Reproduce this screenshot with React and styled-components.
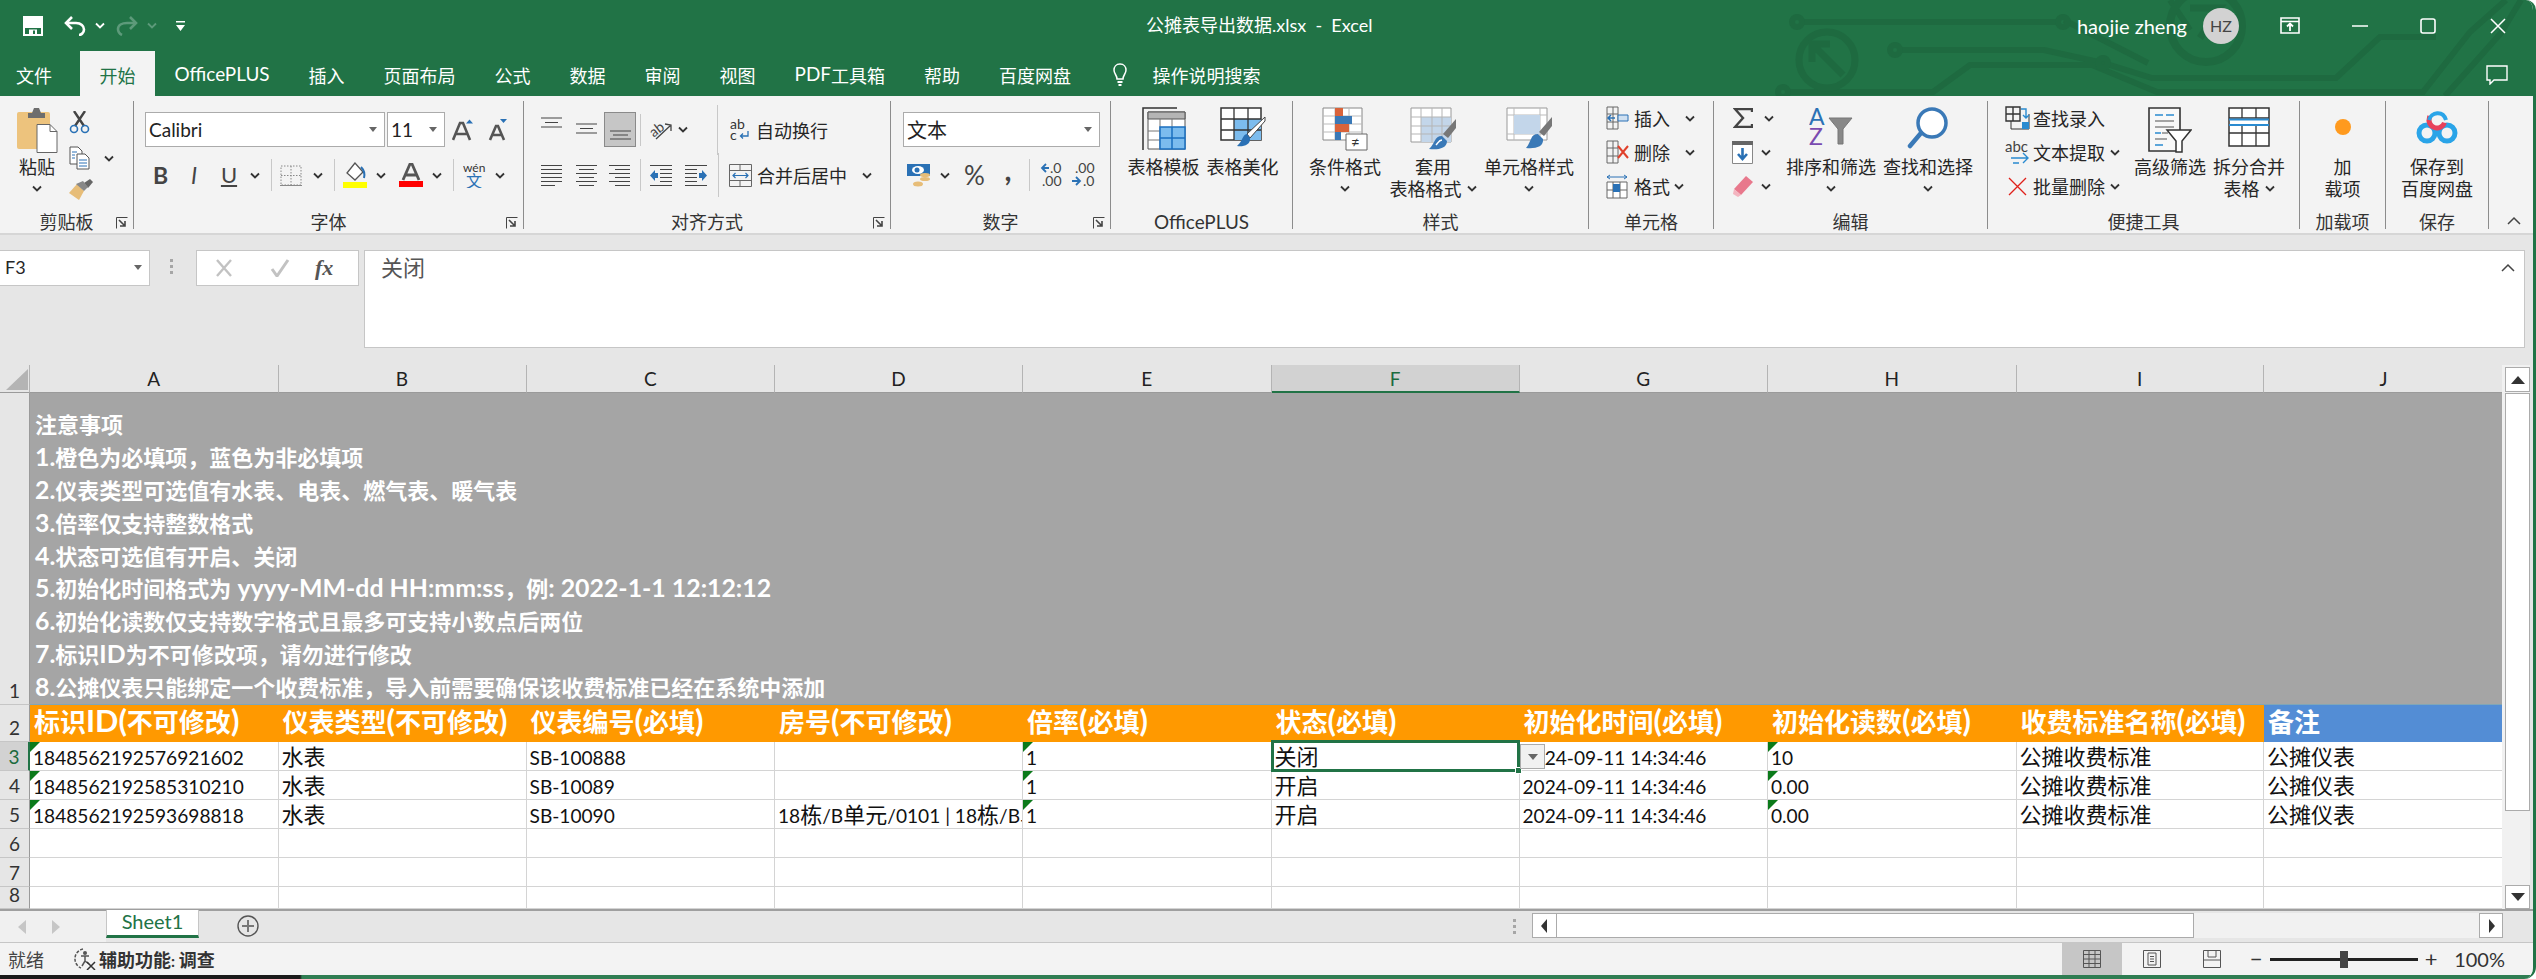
import React from 'react'
import styled, { createGlobalStyle } from 'styled-components'

const CJK = '"Noto Sans CJK SC", sans-serif'
const LATIN = 'Lato, "Noto Sans CJK SC", sans-serif'
const GREEN = '#217346'

const GlobalStyle = createGlobalStyle`
  html, body { margin: 0; padding: 0; background: #fff; }
  body { font-family: ${CJK}; font-size: 18px; color: #262626; }
  * { box-sizing: border-box; }
`

const LatinRun = styled.span`
  font-family: ${LATIN};
  font-size: ${p => p.$scale || 0.87}em;
  line-height: 1;
`
const mix = (text, scale) =>
  text.split(/([\x21-\x7e ]+)/).map((part, i) =>
    i % 2 ? <LatinRun key={i} $scale={scale}>{part}</LatinRun> : part
  )

const Win = styled.div`
  width: 2536px;
  height: 979px;
  display: flex;
  flex-direction: column;
  background: #f3f3f3;
  border-right: 3px solid ${GREEN};
  border-radius: 0 10px 12px 0;
  overflow: hidden;
`

/* title + tabs */
const Head = styled.div`
  position: relative;
  height: 96px;
  background: ${GREEN};
  color: #fff;
  flex: none;
`
const Circuit = styled.svg`
  position: absolute;
  left: 0;
  top: 0;
`
const TitleBar = styled.div`
  position: relative;
  height: 51px;
  display: flex;
  align-items: center;
  padding-left: 23px;
`
const QatSlot = styled.div`
  display: flex;
  align-items: center;
  justify-content: center;
  flex: none;
  width: ${p => p.$w}px;
  margin-left: ${p => p.$ml || 0}px;
`
const DocTitle = styled.div`
  position: absolute;
  left: 1146px;
  top: 9px;
  font-size: 18px;
  line-height: 30px;
  white-space: pre;
`
const TitleRight = styled.div`
  margin-left: auto;
  display: flex;
  align-items: center;
  height: 51px;
`
const UserName = styled.div`
  font-family: ${LATIN};
  font-size: 20px;
  padding-right: 16px;
  white-space: nowrap;
`
const Avatar = styled.div`
  width: 36px;
  height: 36px;
  border-radius: 50%;
  background: #d2d2d2;
  color: #444;
  font-family: ${LATIN};
  font-size: 16px;
  display: flex;
  align-items: center;
  justify-content: center;
`
const TabRow = styled.div`
  position: relative;
  height: 45px;
  display: flex;
`
const Tab = styled.div`
  flex: none;
  height: 45px;
  padding: 2px 19.5px 0;
  display: flex;
  align-items: center;
  font-size: 18px;
  background: ${p => (p.$active ? '#f3f3f3' : 'transparent')};
  color: ${p => (p.$active ? GREEN : '#fff')};
`
const FileTab = styled(Tab)`
  padding: 2px 28px 0 16px;
`
const BulbTab = styled(Tab)`
  padding: 2px 13px 0 23px;
`
const SearchTab = styled(Tab)`
  padding: 2px 0 0 12px;
`
const CommentSlot = styled.div`
  position: absolute;
  right: 25px;
  top: 13px;
`

/* ribbon */
const Ribbon = styled.div`
  flex: none;
  height: 139px;
  display: flex;
  background: #f3f3f3;
  border-bottom: 2px solid #d6d6d6;
  padding-top: 5px;
  position: relative;
`
const Group = styled.div`
  position: relative;
  flex: none;
  width: ${p => p.$w}px;
  height: 128px;
  display: flex;
  flex-direction: column;
  border-right: 1px solid #8c8c8c;
`
const GroupBody = styled.div`
  flex: 1;
  display: flex;
  min-height: 0;
  padding-left: ${p => p.$pad || 0}px;
`
const GroupLabel = styled.div`
  height: 20px;
  line-height: 24px;
  text-align: center;
  font-size: 18px;
  white-space: nowrap;
  color: #333;
`
const Launcher = styled.svg`
  position: absolute;
  right: 5px;
  bottom: 0;
`
const Stack = styled.div`
  display: flex;
  flex-direction: column;
  flex: none;
  width: ${p => (p.$w ? `${p.$w}px` : 'auto')};
  margin-left: ${p => p.$ml || 0}px;
`
const RowA = styled.div`
  display: flex;
  align-items: center;
  height: 35px;
  margin-top: 11px;
`
const RowB = styled.div`
  display: flex;
  align-items: center;
  height: 30px;
  margin-top: 13px;
`
const SmallRow = styled.div`
  display: flex;
  align-items: center;
  height: ${p => p.$h || 34}px;
  white-space: nowrap;
`
const Tool = styled.div`
  flex: none;
  display: flex;
  align-items: center;
  justify-content: center;
  width: ${p => p.$w}px;
  margin-left: ${p => p.$ml || 0}px;
  margin-top: ${p => p.$mt || 0}px;
  height: ${p => (p.$h ? `${p.$h}px` : 'auto')};
  background: ${p => (p.$on ? '#c6c6c6' : 'transparent')};
  border: ${p => (p.$on ? '1px solid #8a8a8a' : 'none')};
`
const Sep = styled.div`
  flex: none;
  width: 1px;
  height: ${p => p.$h || 32}px;
  background: #c8c8c8;
  margin-left: ${p => p.$ml || 0}px;
`
const ToolText = styled.span`
  flex: none;
  margin-left: ${p => p.$ml || 6}px;
  font-size: 18px;
  white-space: nowrap;
`
const Field = styled.div`
  flex: none;
  position: relative;
  width: ${p => p.$w}px;
  height: 35px;
  margin-left: ${p => p.$ml || 0}px;
  background: #fff;
  border: 1px solid #ababab;
  display: flex;
  align-items: center;
  padding-left: 3px;
  font-family: ${p => (p.$cjk ? CJK : LATIN)};
  font-size: ${p => (p.$cjk ? 20 : 19)}px;
  color: #222;
`
const FieldArrow = styled.i`
  position: absolute;
  right: 7px;
  top: 14px;
  border-left: 4px solid transparent;
  border-right: 4px solid transparent;
  border-top: 5px solid #666;
`
const BigButton = styled.div`
  flex: none;
  width: ${p => p.$w}px;
  margin-left: ${p => p.$ml || 0}px;
  padding-top: 6px;
  display: flex;
  flex-direction: column;
  align-items: center;
`
const BigIcon = styled.div`
  height: 48px;
  display: flex;
  align-items: flex-start;
  justify-content: center;
`
const BigLine = styled.div`
  height: 22px;
  line-height: 22px;
  font-size: 18px;
  white-space: nowrap;
  display: flex;
  align-items: center;
  gap: ${p => p.$gap || 0}px;
`
const Collapse = styled.svg`
  align-self: flex-end;
  margin: 0 0 8px 18px;
  flex: none;
`
const BoxGlyph = styled.span`
  font-family: ${LATIN};
  font-size: ${p => p.$size}px;
  font-weight: ${p => p.$weight || 700};
  font-style: ${p => (p.$italic ? 'italic' : 'normal')};
  text-decoration: ${p => (p.$under ? 'underline' : 'none')};
  text-underline-offset: 2px;
  line-height: 1;
  color: #444;
`
const CommaGlyph = styled(BoxGlyph)`
  margin-top: -12px;
`

/* formula bar */
const FormulaBar = styled.div`
  flex: none;
  height: 130px;
  background: #e6e6e6;
  padding: 15px 8px 0 0;
  display: flex;
  align-items: flex-start;
`
const NameBox = styled.div`
  position: relative;
  width: 150px;
  height: 36px;
  background: #fff;
  border: 1px solid #c6c6c6;
  border-left: none;
  font-family: ${LATIN};
  font-size: 18px;
  line-height: 33px;
  padding-left: 5px;
`
const Grip = styled.div`
  flex: none;
  margin-left: ${p => p.$ml}px;
  margin-top: ${p => p.$mt}px;
  width: 3px;
  height: 15px;
  background: repeating-linear-gradient(#a6a6a6 0 3px, transparent 3px 6px);
`
const FxBox = styled.div`
  width: 163px;
  height: 36px;
  margin-left: 23px;
  background: #fff;
  border: 1px solid #c6c6c6;
  display: flex;
  align-items: center;
`
const FxGlyph = styled.span`
  font-family: "Liberation Serif", serif;
  font-style: italic;
  font-weight: 700;
  font-size: 22px;
  color: #555;
  margin-left: 25px;
`
const FormulaInput = styled.div`
  position: relative;
  flex: 1;
  height: 98px;
  margin-left: 5px;
  background: #fff;
  border: 1px solid #c6c6c6;
  padding: 0 0 0 16px;
  font-size: 22px;
  line-height: 30px;
  color: #555;
`
const ExpandUp = styled.svg`
  position: absolute;
  right: 9px;
  top: 12px;
`

/* sheet */
const SheetArea = styled.div`
  flex: none;
  height: 544px;
  display: flex;
  background: #e6e6e6;
`
const Grid = styled.div`
  flex: none;
  width: 2502px;
  height: 544px;
  display: grid;
  grid-template-columns: 30px 248.5px 248px 248.5px 248px 248.5px 248px 248.5px 248.5px 247.5px 240px;
  grid-template-rows: 28px 312px 37px 28.5px 29px 29px 29px 29px 22.5px;
  background: #fff;
  overflow: hidden;
`
const ColHead = styled.div`
  position: relative;
  display: flex;
  align-items: center;
  justify-content: center;
  font-family: ${LATIN};
  font-size: 19px;
  color: ${p => (p.$sel ? '#1c6b3e' : '#222')};
  background: ${p => (p.$sel ? '#d2d2d2' : '#e6e6e6')};
  border-right: 1px solid #b4b4b4;
  border-bottom: ${p => (p.$sel ? `2px solid ${GREEN}` : '1px solid #9a9a9a')};
  &:last-of-type {
    border-right: none;
  }
`
const Corner = styled.div`
  background: #e6e6e6;
  border-right: 1px solid #b4b4b4;
  border-bottom: 1px solid #9a9a9a;
  padding: 4px 0 0 6px;
`
const RowHead = styled.div`
  display: flex;
  align-items: flex-end;
  justify-content: center;
  overflow: hidden;
  font-family: ${LATIN};
  font-size: 19px;
  line-height: 27px;
  color: ${p => (p.$sel ? '#1c6b3e' : '#333')};
  background: ${p => (p.$sel ? '#d2d2d2' : '#e6e6e6')};
  border-bottom: 1px solid #c6c6c6;
  border-right: ${p => (p.$sel ? `2px solid ${GREEN}` : '1px solid #9a9a9a')};
`
const NoteCell = styled.div`
  grid-column: 2 / 12;
  background: #a5a5a5;
  color: #fff;
  font-weight: 700;
  font-size: 22px;
  padding: 0 0 1px 5px;
  display: flex;
  flex-direction: column;
  justify-content: flex-end;
  border-bottom: 1px solid #7fa6b8;
`
const NoteLine = styled.div`
  height: 32.9px;
  line-height: 32.9px;
  white-space: nowrap;
`
const HeadCell = styled.div`
  background: ${p => (p.$blue ? '#538dd5' : '#ff9900')};
  color: #fff;
  font-weight: 700;
  font-size: 26px;
  line-height: 32px;
  padding-left: 4px;
  white-space: nowrap;
  overflow: hidden;
`
const Cell = styled.div`
  position: relative;
  display: flex;
  align-items: center;
  padding: 0 0 2px 3px;
  font-size: 22px;
  line-height: 26px;
  color: #111;
  white-space: nowrap;
  overflow: ${p => (p.$open ? 'visible' : 'hidden')};
  border-right: 1px solid #d4d4d4;
  border-bottom: 1px solid #d4d4d4;
  &::before {
    content: ${p => (p.$flag ? "''" : 'none')};
    position: absolute;
    left: 0;
    top: 0;
    border-top: 10px solid #0b7a1a;
    border-right: 10px solid transparent;
  }
`
const Selection = styled.div`
  position: absolute;
  left: -1px;
  top: -2px;
  right: -1px;
  bottom: -2px;
  border: 3px solid ${GREEN};
  z-index: 2;
  pointer-events: none;
`
const Handle = styled.i`
  position: absolute;
  right: -5px;
  bottom: -5px;
  width: 7px;
  height: 7px;
  background: ${GREEN};
  border: 1px solid #fff;
`
const DropButton = styled.div`
  position: absolute;
  left: 248px;
  top: 2px;
  width: 25px;
  height: 25px;
  background: #f1f1f1;
  border: 1px solid #ababab;
  z-index: 3;
  &::after {
    content: '';
    position: absolute;
    left: 7px;
    top: 9px;
    border-left: 5px solid transparent;
    border-right: 5px solid transparent;
    border-top: 6px solid #666;
  }
`

const VScroll = styled.div`
  flex: none;
  width: 28px;
  height: 544px;
  padding: 2px 0 0 3px;
  display: flex;
  flex-direction: column;
  background: #f1f1f1;
`
const VBtn = styled.div`
  flex: none;
  width: 25px;
  height: ${p => p.$h}px;
  background: #fff;
  border: 1px solid #ababab;
  display: flex;
  align-items: center;
  justify-content: center;
`
const VThumb = styled.div`
  flex: none;
  width: 25px;
  height: 418px;
  margin-top: 1px;
  background: #fff;
  border: 1px solid #ababab;
`
const Fill = styled.div`
  flex: 1;
`

/* sheet tabs */
const TabStrip = styled.div`
  flex: none;
  height: 33px;
  background: #e6e6e6;
  border-top: 2px solid #9f9f9f;
  display: flex;
  align-items: flex-start;
  position: relative;
`
const NavArrows = styled.div`
  flex: none;
  width: 106px;
  height: 31px;
  display: flex;
  align-items: center;
  gap: 26px;
  padding-left: 18px;
  background: #f0f0f0;
`
const SheetTab = styled.div`
  flex: none;
  width: 93px;
  height: 28px;
  background: #fff;
  border: 1px solid #c6c6c6;
  border-top: none;
  border-bottom: 3px solid ${GREEN};
  color: ${GREEN};
  font-family: ${LATIN};
  font-size: 20px;
  line-height: 22px;
  text-align: center;
  margin-top: -1px;
`
const AddSlot = styled.div`
  flex: none;
  margin: 4px 0 0 38px;
  height: 22px;
`
const HScroll = styled.div`
  flex: none;
  width: 971px;
  height: 25px;
  margin: 2px 0 0 16px;
  display: flex;
  background: #f1f1f1;
`
const HBtn = styled.div`
  flex: none;
  width: ${p => p.$w}px;
  height: 25px;
  background: #fff;
  border: 1px solid #ababab;
  display: flex;
  align-items: center;
  justify-content: center;
`
const HThumb = styled.div`
  flex: none;
  width: 637px;
  height: 25px;
  background: #fff;
  border: 1px solid #ababab;
  border-left: none;
`

/* status bar */
const StatusBar = styled.div`
  flex: none;
  height: 33px;
  background: #f3f3f3;
  border-top: 1px solid #c6c6c6;
  display: flex;
  align-items: center;
  padding-left: 8px;
  font-size: 18px;
  color: #444;
`
const StatusBold = styled.span`
  font-weight: 700;
  margin-left: 3px;
  color: #333;
`
const ViewBtn = styled.div`
  flex: none;
  width: 60px;
  height: 32px;
  display: flex;
  align-items: center;
  justify-content: center;
  background: ${p => (p.$on ? '#c6c6c6' : 'transparent')};
`
const Slider = styled.div`
  position: relative;
  flex: none;
  width: 148px;
  height: 3px;
  background: #222;
  margin-left: 7px;
  &::after {
    content: '';
    position: absolute;
    left: 70px;
    top: -7px;
    width: 8px;
    height: 17px;
    background: #444;
  }
`
const ZoomSign = styled.span`
  flex: none;
  font-family: ${LATIN};
  font-size: 22px;
  line-height: 22px;
  width: ${p => p.$w}px;
  margin-left: ${p => p.$ml || 0}px;
  text-align: center;
  color: #333;
`
const ZoomPct = styled.span`
  flex: none;
  font-family: ${LATIN};
  font-size: 20px;
  margin-left: 16px;
  color: #333;
`
const BottomEdge = styled.div`
  flex: none;
  height: 4px;
  background: linear-gradient(90deg, #1a1a1a 0 300px, #2f7d52 302px);
`

/* icons */
const Chev = ({ c = '#333' }) => (
  <svg width="10" height="7" viewBox="0 0 10 7"><path d="M1 1.5l4 4 4-4" fill="none" stroke={c} strokeWidth="1.800" /></svg>
)
const Launch = () => (
  <Launcher width="12" height="12" viewBox="0 0 12 12">
    <path d="M.5 11.5v-11h11" fill="none" stroke="#444" strokeWidth="1" />
    <path d="M3 3l6 6M9 4v5H4" fill="none" stroke="#444" strokeWidth="1.600" />
  </Launcher>
)
const Save = () => (
  <svg width="20" height="20" viewBox="0 0 20 20">
    <path d="M1 1h18v18H1z" fill="none" stroke="#fff" strokeWidth="2" />
    <path d="M2 2h16v10H2z" fill="#fff" />
    <path d="M6 13.500h8V19H6z" fill="#fff" /><path d="M10 14.500h2V18h-2z" fill={GREEN} />
  </svg>
)
const Undo = ({ c = '#fff' }) => (
  <svg width="22" height="20" viewBox="0 0 22 20">
    <path d="M8 1L2 7l6 6" fill="none" stroke={c} strokeWidth="2.600" />
    <path d="M3 7h9c5 0 8 3 8 6.500S17 19 15 19" fill="none" stroke={c} strokeWidth="2.600" />
  </svg>
)
const Redo = ({ c = '#5d9a7a' }) => (
  <svg width="22" height="20" viewBox="0 0 22 20">
    <path d="M14 1l6 6-6 6" fill="none" stroke={c} strokeWidth="2.600" />
    <path d="M19 7h-8C6 7 2 9 2 13s2 5 4 6" fill="none" stroke={c} strokeWidth="2.600" />
  </svg>
)
const QatMore = () => (
  <svg width="9" height="12" viewBox="0 0 9 12"><path d="M0 1h9v1.500H0zM0 5h9L4.500 11z" fill="#fff" /></svg>
)
const RibbonOpts = () => (
  <svg width="20" height="17" viewBox="0 0 20 17">
    <path d="M1 1h18v15H1z" fill="none" stroke="#fff" strokeWidth="1.600" /><path d="M1 4.500h18" stroke="#fff" strokeWidth="1.600" />
    <path d="M10 14V7M7 9.500L10 6.500l3 3" fill="none" stroke="#fff" strokeWidth="1.800" />
  </svg>
)
const Minimize = () => <svg width="16" height="16" viewBox="0 0 16 16"><path d="M0 8h16" stroke="#fff" strokeWidth="1.600" /></svg>
const Maximize = () => <svg width="16" height="16" viewBox="0 0 16 16"><rect x="1" y="1" width="14" height="14" rx="2" fill="none" stroke="#fff" strokeWidth="1.600" /></svg>
const CloseX = () => <svg width="16" height="16" viewBox="0 0 16 16"><path d="M1 1l14 14M15 1L1 15" stroke="#fff" strokeWidth="1.500" /></svg>
const Comment = () => (
  <svg width="22" height="20" viewBox="0 0 22 20">
    <path d="M1 1h20v14H8l-4 4v-4H1z" fill="none" stroke="#fff" strokeWidth="1.400" />
  </svg>
)
const Bulb = () => (
  <svg width="14" height="24" viewBox="0 0 14 24">
    <path d="M7 1C3 1 1 4 1 7c0 4 3 5 3 9h6c0-4 3-5 3-9 0-3-2-6-6-6z" fill="none" stroke="#fff" strokeWidth="1.500" />
    <path d="M4.500 19h5M5.500 22h3" stroke="#fff" strokeWidth="1.800" />
  </svg>
)
const PasteIcon = () => (
  <svg width="42" height="46" viewBox="0 0 42 46">
    <rect x="1" y="5" width="33" height="37" rx="2" fill="#edc37d" />
    <path d="M12 11V6h4l2-5h5l2 5h4v5z" fill="#6d6d6d" />
    <path d="M21 17.500h13l7 7v21H21z" fill="#fff" stroke="#666" />
    <path d="M34 17.500v7h7" fill="none" stroke="#666" />
  </svg>
)
const Scissors = () => (
  <svg width="21" height="23" viewBox="0 0 21 23">
    <path d="M5 0l10 15M16 0L6 15" stroke="#444" strokeWidth="2.400" fill="none" />
    <circle cx="5" cy="18" r="3.500" fill="none" stroke="#2a71b5" strokeWidth="1.600" />
    <circle cx="16" cy="18" r="3.500" fill="none" stroke="#2a71b5" strokeWidth="1.600" />
  </svg>
)
const CopyIcon = () => (
  <svg width="21" height="24" viewBox="0 0 21 24">
    <path d="M1 1h8l4 4v13H1z" fill="#fff" stroke="#555" />
    <path d="M8 8h8l4 4v11H8z" fill="#fff" stroke="#555" />
    <path d="M3 6h5M3 9h3M3 12h3M10 14h8M10 17h8M10 20h8" stroke="#2a71b5" />
  </svg>
)
const Painter = () => (
  <svg width="24" height="21" viewBox="0 0 24 21">
    <path d="M8 5l7 7-5 9-10-7z" fill="#e7bd78" />
    <path d="M15 4l6-4 3 3-5 6z" fill="#666" />
    <path d="M7 5l7-3 5 6-4 4z" fill="#888" />
  </svg>
)
const GrowA = ({ up }) => (
  <svg width="22" height="22" viewBox="0 0 22 22">
    <path d={up ? 'M1 21L8 4h3l7 17M4 15h11' : 'M4 21L10 7h2l6 14M6.500 16h9'} fill="none" stroke="#555" strokeWidth="2.600" />
    <path d={up ? 'M14 4.500l3.500-4 3.500 4z' : 'M14 0h7l-3.500 4z'} fill="#2a71b5" />
  </svg>
)
const BorderIcon = () => (
  <svg width="22" height="21" viewBox="0 0 22 21">
    <path d="M1 1h20v19H1zM11 1v19M1 10.500h20" fill="none" stroke="#888" strokeDasharray="1.500 1.500" />
    <path d="M0 20.500h22" stroke="#888" />
  </svg>
)
const FillIcon = () => (
  <svg width="24" height="26" viewBox="0 0 24 26">
    <path d="M12 1L4 11l8 7 8-8z" fill="#fff" stroke="#555" strokeWidth="1.300" />
    <path d="M18 5c3 3 4 7 3 11" fill="none" stroke="#2a71b5" strokeWidth="2" />
    <path d="M0 20h24v6H0z" fill="#ffff00" />
  </svg>
)
const FontColor = () => (
  <svg width="24" height="24" viewBox="0 0 24 24">
    <path d="M4 17L11 1h2l7 16M7 12h10" fill="none" stroke="#555" strokeWidth="2.800" />
    <path d="M0 18h24v6H0z" fill="#ff0000" />
  </svg>
)
const Wen = () => (
  <svg width="24" height="26" viewBox="0 0 24 26">
    <text x="0" y="10" fontFamily="Lato, sans-serif" fontSize="12" fill="#333">wén</text>
    <text x="3" y="25" fontFamily={CJK} fontSize="16" fill="#2a71b5">文</text>
  </svg>
)
// row A icons share one 33px tall box so the rows of lines sit at their own height
const LINE_SETS = {
  top: 'M0 5h21M4 9.500h13M0 14h21',
  mid: 'M0 11h21M4 15.500h13M0 20h21',
  bot: 'M0 18h21M3 22h15M0 26h21'
}
const VAlign = ({ kind }) => (
  <svg width="21" height="33" viewBox="0 0 21 33"><path d={LINE_SETS[kind]} fill="none" stroke="#444" strokeWidth="1.200" /></svg>
)
const HALIGN = {
  left: 'M0 .5h21M0 4.500h21M0 8.500h21M0 12.500h21M0 16.500h21M0 20.500h14',
  center: 'M0 .5h21M3 4.500h15M0 8.500h21M3 12.500h15M0 16.500h21M3 20.500h15',
  right: 'M0 .5h21M6 4.500h15M0 8.500h21M6 12.500h15M0 16.500h21M6 20.500h15'
}
const HAlign = ({ kind }) => (
  <svg width="21" height="21" viewBox="0 0 21 21"><path d={HALIGN[kind]} fill="none" stroke="#444" strokeWidth="1.100" /></svg>
)
const Orient = () => (
  <svg width="23" height="22" viewBox="0 0 23 22">
    <text x="0" y="16" fontFamily="Lato, sans-serif" fontSize="14" fill="#444" transform="rotate(-38 6 12)">ab</text>
    <path d="M6 20L21 6M15 5l6 1v6" fill="none" stroke="#444" strokeWidth="1.300" />
  </svg>
)
const WrapIcon = () => (
  <svg width="20" height="22" viewBox="0 0 20 22">
    <text x="0" y="10" fontFamily="Lato, sans-serif" fontSize="14" fill="#333">ab</text>
    <text x="0" y="21" fontFamily="Lato, sans-serif" fontSize="14" fill="#333">c</text>
    <path d="M18 12v5h-7M13 14.500L10.500 17l2.500 2.500" fill="none" stroke="#2a71b5" strokeWidth="1.300" />
  </svg>
)
const Indent = ({ back }) => (
  <svg width="23" height="21" viewBox="0 0 23 21">
    <path d={back ? 'M0 .5h22M10 4.500h12M10 8.500h12M10 12.500h12M10 16.500h12M0 20.500h22' : 'M1 .5h22M1 4.500h12M1 8.500h12M1 12.500h12M1 16.500h12M1 20.500h22'} stroke="#444" strokeWidth="1.100" />
    <path d={back ? 'M5 5l-5 5.500L5 16v-3h3V8H5z' : 'M18 5l5 5.500L18 16v-3h-3V8h3z'} fill="#2a71b5" />
  </svg>
)
const MergeIcon = () => (
  <svg width="23" height="23" viewBox="0 0 23 23">
    <path d="M.5 .5h22v22H.5zM.5 6.500h22M.5 16.500h22M11 .5v6M11 16.500v6" fill="none" stroke="#666" />
    <path d="M4 11.500h15M6.500 9L4 11.500 6.500 14M16.500 9l2.500 2.500-2.500 2.500" fill="none" stroke="#2a71b5" strokeWidth="1.200" />
  </svg>
)
const Currency = () => (
  <svg width="24" height="23" viewBox="0 0 24 23">
    <path d="M0 0h23v12H0z" fill="#2a71b5" />
    <ellipse cx="11" cy="6" rx="6" ry="4" fill="#fff" /><circle cx="10" cy="6" r="2.500" fill="#2a71b5" />
    <ellipse cx="18" cy="11" rx="5" ry="2" fill="#e7bd78" /><ellipse cx="18" cy="15" rx="5" ry="2" fill="#e7bd78" /><ellipse cx="11" cy="20" rx="5" ry="2.500" fill="#e7bd78" />
  </svg>
)
const DecIcon = ({ more }) => (
  <svg width="26" height="26" viewBox="0 0 26 26">
    {more ? (
      <>
        <text x="11" y="11" fontFamily={LATIN} fontSize="14" fill="#444">.0</text>
        <text x="3" y="24" fontFamily={LATIN} fontSize="14" fill="#444">.00</text>
        <path d="M7 2L3 6l4 4M3 6h7" fill="none" stroke="#2a71b5" strokeWidth="1.800" />
      </>
    ) : (
      <>
        <text x="4" y="11" fontFamily={LATIN} fontSize="14" fill="#444">.00</text>
        <text x="12" y="24" fontFamily={LATIN} fontSize="14" fill="#444">.0</text>
        <path d="M5 15l4 4-4 4M1 19h7" fill="none" stroke="#2a71b5" strokeWidth="1.800" />
      </>
    )}
  </svg>
)
const TableTpl = () => (
  <svg width="44" height="44" viewBox="0 0 44 44">
    <path d="M1 43V1h34" fill="none" stroke="#333" strokeWidth="1.500" />
    <path d="M6 5h37v37H6z" fill="#fff" stroke="#555" />
    <path d="M6 5h37v7H6z" fill="#b5b5b5" stroke="#555" />
    <path d="M18 12v30M30 12v12M6 24h37M6 33h37" fill="none" stroke="#777" />
    <path d="M18 20h25v22H18z" fill="#7cbcee" stroke="#1a6fc0" strokeWidth="1.500" />
    <path d="M18 31h25M30 20v22" stroke="#1a6fc0" strokeWidth="1.500" />
  </svg>
)
const TableBeauty = () => (
  <svg width="46" height="42" viewBox="0 0 46 42">
    <path d="M1 1h40v32H1z" fill="#fff" stroke="#333" strokeWidth="1.500" />
    <path d="M14 12h27v21H14z" fill="#7cbcee" />
    <path d="M1 12h40M1 23h40M14 1v32M28 1v32" fill="none" stroke="#333" strokeWidth="1.300" />
    <path d="M45 10L27 27l3 4L45 14z" fill="#fff" stroke="#444" />
    <path d="M27 27c-5 1-4 7-10 12 6 1 14-1 13-8z" fill="#2a71b5" />
  </svg>
)
const CondFmt = () => (
  <svg width="46" height="44" viewBox="0 0 46 44">
    <path d="M1 1h39v32H1z" fill="#fff" stroke="#888" />
    <path d="M1 9h39M1 17h39M1 25h39M13 1v32M27 1v32" stroke="#bbb" />
    <path d="M13 1h8v8h-8zM13 17h14v8H13z" fill="#d9633a" />
    <path d="M13 9h17v8H13zM13 25h6v8h-6z" fill="#3a79b7" />
    <path d="M24 27h21v16H24z" fill="#fff" stroke="#666" />
    <text x="29" y="41" fontFamily="Lato, sans-serif" fontSize="15" fill="#333">≠</text>
  </svg>
)
const TableFmt = () => (
  <svg width="46" height="44" viewBox="0 0 46 44">
    <path d="M1 1h40v34H1z" fill="#fff" stroke="#999" />
    <path d="M11 10h30v25H11z" fill="#c3d6ea" />
    <path d="M1 10h40M1 19h40M1 27h40M11 1v34M22 1v34M32 1v34" stroke="#b5b5b5" />
    <path d="M46 12L33 27l5 4 8-10z" fill="#777" />
    <path d="M32 29c-8 0-7 8-13 13 8 1 18 0 18-8z" fill="#3a79b7" />
    <path d="M26 38c2-2 3-5 6-5" stroke="#fff" strokeWidth="1.500" fill="none" />
  </svg>
)
const CellStyle = () => (
  <svg width="46" height="42" viewBox="0 0 46 42">
    <path d="M1 1h40v32H1z" fill="#fff" stroke="#999" />
    <path d="M1 8h40M1 27h40M8 1v32M34 1v32" stroke="#bbb" />
    <path d="M8 8h26v19H8z" fill="#c3d6ea" />
    <path d="M46 10L33 25l5 4 8-10z" fill="#777" />
    <path d="M32 27c-8 0-6 7-12 14 9 1 18-1 17-9z" fill="#3a79b7" />
  </svg>
)
const CellsIcon = ({ kind }) => (
  <svg width="23" height="25" viewBox="0 0 23 25">
    <path d={kind === 'fmt' ? 'M1 8h20v16H1zM7 8v16M14 8v16M1 16h20' : 'M1 1h11v22H1zM1 8h11M1 16h11M7 1v22'} fill={kind === 'fmt' ? '#fff' : 'none'} stroke="#666" />
    {kind === 'ins' && <><path d="M12 9h10v6H12z" fill="#cfe0f1" stroke="#2a71b5" /><path d="M9 12H2M5 9l-3 3 3 3" fill="none" stroke="#2a71b5" strokeWidth="1.500" /></>}
    {kind === 'del' && <path d="M12 6l10 12M22 6L12 18" stroke="#e0402a" strokeWidth="2" />}
    {kind === 'fmt' && <><path d="M1 3h20M4 1L1 3l3 2M18 1l3 2-3 2" fill="none" stroke="#2a71b5" /><path d="M7 10h7v8H7z" fill="#2a71b5" /></>}
  </svg>
)
const Sigma = () => (
  <svg width="20" height="20" viewBox="0 0 20 20"><path d="M19 4V1H2l8 9-8 9h17v-3" fill="none" stroke="#444" strokeWidth="2.400" /></svg>
)
const FillDown = () => (
  <svg width="21" height="23" viewBox="0 0 21 23">
    <path d="M.5 .5h20v22H.5z" fill="#fff" stroke="#888" /><path d="M0 0h21v4H0z" fill="#666" />
    <path d="M10.500 7v11M6 13l4.500 5 4.500-5" fill="none" stroke="#2a71b5" strokeWidth="2.600" />
  </svg>
)
const Eraser = () => (
  <svg width="22" height="21" viewBox="0 0 22 21">
    <path d="M14 0l7 6L9 19l-7-6z" fill="#e8788c" /><path d="M2 13l7 6-3 2-5-3z" fill="#f3b4bf" />
  </svg>
)
const SortIcon = () => (
  <svg width="44" height="40" viewBox="0 0 44 40">
    <text x="0" y="18" fontFamily={LATIN} fontSize="23" fill="#2a71b5">A</text>
    <text x="0" y="38" fontFamily={LATIN} fontSize="23" fill="#7a4bb0">Z</text>
    <path d="M20 11h23l-9 11v15h-5V22z" fill="#888" stroke="#777" />
  </svg>
)
const Magnifier = () => (
  <svg width="42" height="42" viewBox="0 0 42 42">
    <circle cx="25" cy="16" r="14" fill="#fff" stroke="#3a79b7" strokeWidth="3.500" />
    <path d="M14 26L3 39" stroke="#3a79b7" strokeWidth="4.500" strokeLinecap="round" />
  </svg>
)
const LookupIcon = () => (
  <svg width="25" height="24" viewBox="0 0 25 24">
    <path d="M1 1h14v14H1zM1 8h14M8 1v14" fill="none" stroke="#333" strokeWidth="1.400" />
    <path d="M6 15v8h18V8" fill="none" stroke="#333" />
    <path d="M16 3h5v8M18 9l3 3 3-3" fill="none" stroke="#2a8bd0" strokeWidth="1.400" />
    <path d="M17 16h7v7h-7z" fill="#2a8bd0" />
  </svg>
)
const ExtractIcon = () => (
  <svg width="25" height="24" viewBox="0 0 25 24">
    <text x="0" y="12" fontFamily="Lato, sans-serif" fontSize="15" fill="#444">abc</text>
    <path d="M6 18h17M18 13l5 5-5 5M8 23h6" fill="none" stroke="#2a8bd0" strokeWidth="1.400" />
  </svg>
)
const BatchDelete = () => (
  <svg width="19" height="19" viewBox="0 0 19 19"><path d="M1 1l17 17M18 1L1 18" stroke="#e0201a" strokeWidth="1.300" /></svg>
)
const AdvFilter = () => (
  <svg width="44" height="46" viewBox="0 0 44 46">
    <path d="M1 1h31v43H1z" fill="#f8f8f8" stroke="#333" strokeWidth="1.600" />
    <path d="M7 8h8M18 8h8" stroke="#2a8bd0" strokeWidth="1.600" />
    <path d="M7 14h19M7 20h19M14 26h6M7 32h12" stroke="#888" strokeWidth="1.600" />
    <path d="M7 26h6M7 38h8" stroke="#2a8bd0" strokeWidth="1.600" />
    <path d="M19 23h24l-9 11v11h-6V34z" fill="#fff" stroke="#333" strokeWidth="1.500" />
  </svg>
)
const SplitTable = () => (
  <svg width="42" height="40" viewBox="0 0 42 40">
    <path d="M1 1h40v38H1z" fill="#fff" stroke="#333" strokeWidth="1.500" />
    <path d="M1 11h40M1 26h40M14 1v10M28 1v10M14 18v21M28 18v21" stroke="#333" strokeWidth="1.300" fill="none" />
    <path d="M1 12.500h40M1 18h40" stroke="#2a8bd0" strokeWidth="2" />
  </svg>
)
const Dot = () => (
  <svg width="18" height="32" viewBox="0 0 18 32"><circle cx="9" cy="20" r="8" fill="#ff9a1e" /></svg>
)
const BaiduCloud = () => (
  <svg width="42" height="38" viewBox="0 0 42 38">
    <circle cx="11" cy="26" r="8" fill="none" stroke="#2aa4e8" strokeWidth="5" />
    <circle cx="31" cy="26" r="8" fill="none" stroke="#2aa4e8" strokeWidth="5" />
    <circle cx="21" cy="13" r="8" fill="none" stroke="#e8415a" strokeWidth="5" strokeDasharray="26 26" transform="rotate(20 21 13)" />
    <path d="M13 13c2-8 14-10 17 0" fill="none" stroke="#2aa4e8" strokeWidth="4" />
  </svg>
)
const CornerTri = () => (
  <svg width="22" height="21" viewBox="0 0 22 21" display="block"><path d="M22 0v21H0z" fill="#b4b4b4" /></svg>
)
const FxIconX = styled.svg`
  margin-left: 18px;
`
const FxIconCheck = styled.svg`
  margin-left: 37px;
`
const FxX = () => <FxIconX width="18" height="18" viewBox="0 0 18 18"><path d="M2 1l14 16M16 1L2 17" stroke="#c2c2c2" strokeWidth="2.400" /></FxIconX>
const FxCheck = () => <FxIconCheck width="20" height="18" viewBox="0 0 20 18"><path d="M2 10l5 7L18 1" fill="none" stroke="#c2c2c2" strokeWidth="3" /></FxIconCheck>
const TriBtn = ({ d, c = '#333' }) => <svg width="8" height="14" viewBox="0 0 8 14"><path d={d} fill={c} /></svg>
const Plus = () => (
  <svg width="22" height="22" viewBox="0 0 22 22">
    <circle cx="11" cy="11" r="10" fill="none" stroke="#555" strokeWidth="1.400" />
    <path d="M11 5v12M5 11h12" stroke="#777" strokeWidth="2" />
  </svg>
)
const AccessSvg = styled.svg`
  margin-left: 30px;
  flex: none;
`
const AccessIcon = () => (
  <AccessSvg width="22" height="22" viewBox="0 0 22 22">
    <path d="M9 1A10 10 0 0 0 7 20" fill="none" stroke="#555" strokeWidth="1.500" strokeDasharray="3 1.500" />
    <circle cx="11" cy="5" r="2" fill="#555" />
    <path d="M7 8h8M11 8v5l-3 5M11 13l4 3" fill="none" stroke="#555" strokeWidth="1.500" />
    <path d="M13 14l8 8M21 14l-8 8" stroke="#333" strokeWidth="1.500" />
  </AccessSvg>
)
const NormalView = () => (
  <svg width="18" height="18" viewBox="0 0 18 18"><path d="M.5 .5h17v17H.5zM.5 4.500h17M.5 9h17M.5 13.500h17M6 .5v17M12 .5v17" fill="none" stroke="#555" /></svg>
)
const LayoutView = () => (
  <svg width="18" height="18" viewBox="0 0 18 18"><path d="M.5 .5h17v17H.5zM5 3h8v12H5zM7 6.500h4M7 9h4M7 11.500h4" fill="none" stroke="#555" /></svg>
)
const BreakView = () => (
  <svg width="18" height="18" viewBox="0 0 18 18"><path d="M.5 .5h17v17H.5zM.5 10h17M5 .5V7h8V.5" fill="none" stroke="#555" /></svg>
)

const CircuitArt = () => (
  <Circuit width="2536" height="96" viewBox="0 0 2536 96">
    <g fill="none" stroke="#1e6a40" strokeWidth="6">
      <path d="M1800 22h260M1899 50h145l59 13 49 15h184l44-41h56" />
      <path d="M1786 92h147l37-27h122l65 27h266l47-60 36-32" />
      <path d="M2064 20l84 43M2170 0l20 30" />
      <path d="M2445 96l56-63 20-33" />
      <circle cx="1797" cy="22" r="5" /><circle cx="2063" cy="22" r="5" />
      <circle cx="1895" cy="50" r="5" /><circle cx="2103" cy="63" r="5" /><circle cx="1783" cy="92" r="5" />
      <circle cx="1827" cy="60" r="28" strokeWidth="7" />
      <circle cx="2206" cy="26" r="36" strokeWidth="8" />
      <path d="M1843 75l-28-28M1812 62V44h18" strokeWidth="7" />
      <path d="M2190 8h30l-20 30" strokeWidth="7" />
    </g>
  </Circuit>
)

const tabs = ['OfficePLUS', '插入', '页面布局', '公式', '数据', '审阅', '视图', 'PDF工具箱', '帮助', '百度网盘']
const columns = ['A', 'B', 'C', 'D', 'E', 'F', 'G', 'H', 'I', 'J']
const notes = [
  '注意事项',
  '1.橙色为必填项，蓝色为非必填项',
  '2.仪表类型可选值有水表、电表、燃气表、暖气表',
  '3.倍率仅支持整数格式',
  '4.状态可选值有开启、关闭',
  '5.初始化时间格式为 yyyy-MM-dd HH:mm:ss，例: 2022-1-1 12:12:12',
  '6.初始化读数仅支持数字格式且最多可支持小数点后两位',
  '7.标识ID为不可修改项，请勿进行修改',
  '8.公摊仪表只能绑定一个收费标准，导入前需要确保该收费标准已经在系统中添加'
]
const headers = ['标识ID(不可修改)', '仪表类型(不可修改)', '仪表编号(必填)', '房号(不可修改)', '倍率(必填)', '状态(必填)', '初始化时间(必填)', '初始化读数(必填)', '收费标准名称(必填)', '备注']
const rows = [
  ['1848562192576921602', '水表', 'SB-100888', '', '1', '关闭', '2024-09-11 14:34:46', '10', '公摊收费标准', '公摊仪表'],
  ['1848562192585310210', '水表', 'SB-10089', '', '1', '开启', '2024-09-11 14:34:46', '0.00', '公摊收费标准', '公摊仪表'],
  ['1848562192593698818', '水表', 'SB-10090', '18栋/B单元/0101 | 18栋/B单元/0102', '1', '开启', '2024-09-11 14:34:46', '0.00', '公摊收费标准', '公摊仪表']
]
const flagged = [0, 4, 7]

function App() {
  return (
    <Win>
      <GlobalStyle />
      <Head>
        <CircuitArt />
        <TitleBar>
          <QatSlot $w={20}><Save /></QatSlot>
          <QatSlot $w={22} $ml={21}><Undo /></QatSlot>
          <QatSlot $w={10} $ml={9}><Chev c="#fff" /></QatSlot>
          <QatSlot $w={22} $ml={11}><Redo /></QatSlot>
          <QatSlot $w={10} $ml={9}><Chev c="#5d9a7a" /></QatSlot>
          <QatSlot $w={10} $ml={18}><QatMore /></QatSlot>
          <DocTitle>{mix('公摊表导出数据.xlsx  -  Excel', 1)}</DocTitle>
          <TitleRight>
            <UserName>haojie zheng</UserName>
            <Avatar>HZ</Avatar>
            <QatSlot $w={20} $ml={41}><RibbonOpts /></QatSlot>
            <QatSlot $w={16} $ml={52}><Minimize /></QatSlot>
            <QatSlot $w={16} $ml={52}><Maximize /></QatSlot>
            <QatSlot $w={16} $ml={54}><CloseX /></QatSlot>
            <QatSlot $w={27} />
          </TitleRight>
        </TitleBar>
        <TabRow>
          <FileTab>文件</FileTab>
          <Tab $active>开始</Tab>
          {tabs.map(t => <Tab key={t}>{mix(t, 1.05)}</Tab>)}
          <BulbTab><Bulb /></BulbTab>
          <SearchTab>操作说明搜索</SearchTab>
          <CommentSlot><Comment /></CommentSlot>
        </TabRow>
      </Head>

      <Ribbon>
        <Group $w={134}>
          <GroupBody $pad={16}>
            <BigButton $w={42}>
              <BigIcon><PasteIcon /></BigIcon>
              <BigLine>粘贴</BigLine>
              <BigLine><Chev /></BigLine>
            </BigButton>
            <Stack $ml={10} $w={50}>
              <Tool $w={22} $h={40} $mt={1}><Scissors /></Tool>
              <SmallRow $h={32}>
                <Tool $w={22}><CopyIcon /></Tool>
                <Tool $w={10} $ml={14}><Chev /></Tool>
              </SmallRow>
              <Tool $w={26} $h={26} $mt={2}><Painter /></Tool>
            </Stack>
          </GroupBody>
          <GroupLabel>剪贴板</GroupLabel>
          <Launch />
        </Group>

        <Group $w={390}>
          <GroupBody $pad={11}>
            <Stack>
              <RowA>
                <Field $w={240}>Calibri<FieldArrow /></Field>
                <Field $w={58} $ml={2}>11<FieldArrow /></Field>
                <Tool $w={22} $ml={7}><GrowA up /></Tool>
                <Tool $w={22} $ml={12}><GrowA /></Tool>
              </RowA>
              <RowB>
                <Tool $w={15} $ml={8}><BoxGlyph $size={23}>B</BoxGlyph></Tool>
                <Tool $w={12} $ml={20}><BoxGlyph $size={23} $weight={400} $italic>I</BoxGlyph></Tool>
                <Tool $w={14} $ml={22}><BoxGlyph $size={22} $weight={400} $under>U</BoxGlyph></Tool>
                <Tool $w={10} $ml={14}><Chev /></Tool>
                <Sep $ml={11} />
                <Tool $w={22} $ml={8}><BorderIcon /></Tool>
                <Tool $w={10} $ml={11}><Chev /></Tool>
                <Sep $ml={11} />
                <Tool $w={24} $ml={8}><FillIcon /></Tool>
                <Tool $w={10} $ml={9}><Chev /></Tool>
                <Tool $w={24} $ml={13}><FontColor /></Tool>
                <Tool $w={10} $ml={9}><Chev /></Tool>
                <Sep $ml={11} />
                <Tool $w={24} $ml={9}><Wen /></Tool>
                <Tool $w={10} $ml={8}><Chev /></Tool>
              </RowB>
            </Stack>
          </GroupBody>
          <GroupLabel>字体</GroupLabel>
          <Launch />
        </Group>

        <Group $w={367}>
          <GroupBody $pad={17}>
            <Stack>
              <RowA>
                <Tool $w={21}><VAlign kind="top" /></Tool>
                <Tool $w={21} $ml={14}><VAlign kind="mid" /></Tool>
                <Tool $w={32} $ml={7} $h={35} $on><VAlign kind="bot" /></Tool>
                <Sep $ml={4} />
                <Tool $w={23} $ml={9}><Orient /></Tool>
                <Tool $w={10} $ml={5}><Chev /></Tool>
                <Sep $ml={29} $h={50} />
                <Tool $w={20} $ml={12}><WrapIcon /></Tool>
                <ToolText>自动换行</ToolText>
              </RowA>
              <RowB>
                <Tool $w={21}><HAlign kind="left" /></Tool>
                <Tool $w={21} $ml={14}><HAlign kind="center" /></Tool>
                <Tool $w={21} $ml={12}><HAlign kind="right" /></Tool>
                <Sep $ml={10} />
                <Tool $w={23} $ml={9}><Indent back /></Tool>
                <Tool $w={23} $ml={11}><Indent /></Tool>
                <Sep $ml={11} $h={44} />
                <Tool $w={23} $ml={10}><MergeIcon /></Tool>
                <ToolText $ml={5}>合并后居中</ToolText>
                <Tool $w={10} $ml={15}><Chev /></Tool>
              </RowB>
            </Stack>
          </GroupBody>
          <GroupLabel>对齐方式</GroupLabel>
          <Launch />
        </Group>

        <Group $w={220}>
          <GroupBody $pad={12}>
            <Stack>
              <RowA>
                <Field $w={197} $cjk>文本<FieldArrow /></Field>
              </RowA>
              <RowB>
                <Tool $w={24} $ml={4}><Currency /></Tool>
                <Tool $w={10} $ml={9}><Chev /></Tool>
                <Tool $w={21} $ml={14}><BoxGlyph $size={26} $weight={400}>%</BoxGlyph></Tool>
                <Tool $w={10} $ml={18}><CommaGlyph $size={30}>,</CommaGlyph></Tool>
                <Sep $ml={16} />
                <Tool $w={26} $ml={9}><DecIcon more /></Tool>
                <Tool $w={26} $ml={6}><DecIcon /></Tool>
              </RowB>
            </Stack>
          </GroupBody>
          <GroupLabel>数字</GroupLabel>
          <Launch />
        </Group>

        <Group $w={182}>
          <GroupBody>
            <BigButton $w={73} $ml={16}>
              <BigIcon><TableTpl /></BigIcon>
              <BigLine>表格模板</BigLine>
            </BigButton>
            <BigButton $w={73} $ml={6}>
              <BigIcon><TableBeauty /></BigIcon>
              <BigLine>表格美化</BigLine>
            </BigButton>
          </GroupBody>
          <GroupLabel>{mix('OfficePLUS', 1.05)}</GroupLabel>
        </Group>

        <Group $w={296}>
          <GroupBody>
            <BigButton $w={72} $ml={16}>
              <BigIcon><CondFmt /></BigIcon>
              <BigLine>条件格式</BigLine>
              <BigLine><Chev /></BigLine>
            </BigButton>
            <BigButton $w={90} $ml={7}>
              <BigIcon><TableFmt /></BigIcon>
              <BigLine>套用</BigLine>
              <BigLine $gap={5}>表格格式<Chev /></BigLine>
            </BigButton>
            <BigButton $w={90} $ml={6}>
              <BigIcon><CellStyle /></BigIcon>
              <BigLine>单元格样式</BigLine>
              <BigLine><Chev /></BigLine>
            </BigButton>
          </GroupBody>
          <GroupLabel>样式</GroupLabel>
        </Group>

        <Group $w={125}>
          <GroupBody $pad={17}>
            <Stack>
              <SmallRow><Tool $w={23}><CellsIcon kind="ins" /></Tool><ToolText $ml={5}>插入</ToolText><Tool $w={10} $ml={15}><Chev /></Tool></SmallRow>
              <SmallRow><Tool $w={23}><CellsIcon kind="del" /></Tool><ToolText $ml={5}>删除</ToolText><Tool $w={10} $ml={15}><Chev /></Tool></SmallRow>
              <SmallRow><Tool $w={23}><CellsIcon kind="fmt" /></Tool><ToolText $ml={5}>格式</ToolText><Tool $w={10} $ml={4}><Chev /></Tool></SmallRow>
            </Stack>
          </GroupBody>
          <GroupLabel>单元格</GroupLabel>
        </Group>

        <Group $w={274}>
          <GroupBody $pad={18}>
            <Stack $w={54}>
              <SmallRow><Tool $w={21}><Sigma /></Tool><Tool $w={10} $ml={11}><Chev /></Tool></SmallRow>
              <SmallRow><Tool $w={21}><FillDown /></Tool><Tool $w={10} $ml={8}><Chev /></Tool></SmallRow>
              <SmallRow><Tool $w={22}><Eraser /></Tool><Tool $w={10} $ml={7}><Chev /></Tool></SmallRow>
            </Stack>
            <BigButton $w={90}>
              <BigIcon><SortIcon /></BigIcon>
              <BigLine>排序和筛选</BigLine>
              <BigLine><Chev /></BigLine>
            </BigButton>
            <BigButton $w={90} $ml={7}>
              <BigIcon><Magnifier /></BigIcon>
              <BigLine>查找和选择</BigLine>
              <BigLine><Chev /></BigLine>
            </BigButton>
          </GroupBody>
          <GroupLabel>编辑</GroupLabel>
        </Group>

        <Group $w={312}>
          <GroupBody $pad={17}>
            <Stack $w={129}>
              <SmallRow><Tool $w={25}><LookupIcon /></Tool><ToolText $ml={3}>查找录入</ToolText></SmallRow>
              <SmallRow><Tool $w={25}><ExtractIcon /></Tool><ToolText $ml={3}>文本提取</ToolText><Tool $w={10} $ml={5}><Chev /></Tool></SmallRow>
              <SmallRow><Tool $w={25}><BatchDelete /></Tool><ToolText $ml={3}>批量删除</ToolText><Tool $w={10} $ml={5}><Chev /></Tool></SmallRow>
            </Stack>
            <BigButton $w={72}>
              <BigIcon><AdvFilter /></BigIcon>
              <BigLine>高级筛选</BigLine>
            </BigButton>
            <BigButton $w={72} $ml={7}>
              <BigIcon><SplitTable /></BigIcon>
              <BigLine>拆分合并</BigLine>
              <BigLine $gap={5}>表格<Chev /></BigLine>
            </BigButton>
          </GroupBody>
          <GroupLabel>便捷工具</GroupLabel>
        </Group>

        <Group $w={86}>
          <GroupBody>
            <BigButton $w={85}>
              <BigIcon><Dot /></BigIcon>
              <BigLine>加</BigLine>
              <BigLine>载项</BigLine>
            </BigButton>
          </GroupBody>
          <GroupLabel>加载项</GroupLabel>
        </Group>

        <Group $w={103}>
          <GroupBody>
            <BigButton $w={102}>
              <BigIcon><BaiduCloud /></BigIcon>
              <BigLine>保存到</BigLine>
              <BigLine>百度网盘</BigLine>
            </BigButton>
          </GroupBody>
          <GroupLabel>保存</GroupLabel>
        </Group>

        <Collapse width="14" height="9" viewBox="0 0 14 9">
          <path d="M1 8l6-6 6 6" fill="none" stroke="#444" strokeWidth="1.500" />
        </Collapse>
      </Ribbon>

      <FormulaBar>
        <NameBox>F3<FieldArrow /></NameBox>
        <Grip $ml={20} $mt={9} />
        <FxBox>
          <FxX />
          <FxCheck />
          <FxGlyph>fx</FxGlyph>
        </FxBox>
        <FormulaInput>
          关闭
          <ExpandUp width="14" height="9" viewBox="0 0 14 9"><path d="M1 8l6-6 6 6" fill="none" stroke="#444" strokeWidth="1.500" /></ExpandUp>
        </FormulaInput>
      </FormulaBar>

      <SheetArea>
        <Grid>
          <Corner><CornerTri /></Corner>
          {columns.map(c => <ColHead key={c} $sel={c === 'F'}>{c}</ColHead>)}

          <RowHead>1</RowHead>
          <NoteCell>{notes.map(n => <NoteLine key={n}>{mix(n, 1.13)}</NoteLine>)}</NoteCell>

          <RowHead>2</RowHead>
          {headers.map((h, i) => <HeadCell key={h} $blue={i === 9}>{mix(h, 1.18)}</HeadCell>)}

          {rows.map((row, r) => (
            <React.Fragment key={r}>
              <RowHead $sel={r === 0}>{r + 3}</RowHead>
              {row.map((v, c) => {
                const selected = r === 0 && c === 5
                return (
                  <Cell key={c} $flag={flagged.includes(c)} $open={selected}>
                    <div>{mix(v)}</div>
                    {selected && <Selection><Handle /></Selection>}
                    {selected && <DropButton />}
                  </Cell>
                )
              })}
            </React.Fragment>
          ))}
          {[6, 7, 8].map(n => (
            <React.Fragment key={n}>
              <RowHead>{n}</RowHead>
              {columns.map(c => <Cell key={c} />)}
            </React.Fragment>
          ))}
        </Grid>
        <VScroll>
          <VBtn $h={25}><svg width="14" height="8" viewBox="0 0 14 8"><path d="M7 0l7 8H0z" fill="#333" /></svg></VBtn>
          <VThumb />
          <Fill />
          <VBtn $h={24}><svg width="14" height="8" viewBox="0 0 14 8"><path d="M0 0h14L7 8z" fill="#333" /></svg></VBtn>
        </VScroll>
      </SheetArea>

      <TabStrip>
        <NavArrows>
          <TriBtn d="M8 0v14L0 7z" c="#c6c6c6" />
          <TriBtn d="M0 0v14l8-7z" c="#c6c6c6" />
        </NavArrows>
        <SheetTab>Sheet1</SheetTab>
        <AddSlot><Plus /></AddSlot>
        <Grip $ml={1254} $mt={8} />
        <HScroll>
          <HBtn $w={25}><TriBtn d="M6 0v14L0 7z" /></HBtn>
          <HThumb />
          <Fill />
          <HBtn $w={24}><TriBtn d="M2 0v14l6-7z" /></HBtn>
        </HScroll>
      </TabStrip>

      <StatusBar>
        就绪
        <AccessIcon />
        <StatusBold>{mix('辅助功能: 调查')}</StatusBold>
        <Fill />
        <ViewBtn $on><NormalView /></ViewBtn>
        <ViewBtn><LayoutView /></ViewBtn>
        <ViewBtn><BreakView /></ViewBtn>
        <ZoomSign $w={14} $ml={7}>−</ZoomSign>
        <Slider />
        <ZoomSign $w={14} $ml={6}>+</ZoomSign>
        <ZoomPct>100%</ZoomPct>
        <QatSlot $w={28} />
      </StatusBar>
      <BottomEdge />
    </Win>
  )
}

export default App
